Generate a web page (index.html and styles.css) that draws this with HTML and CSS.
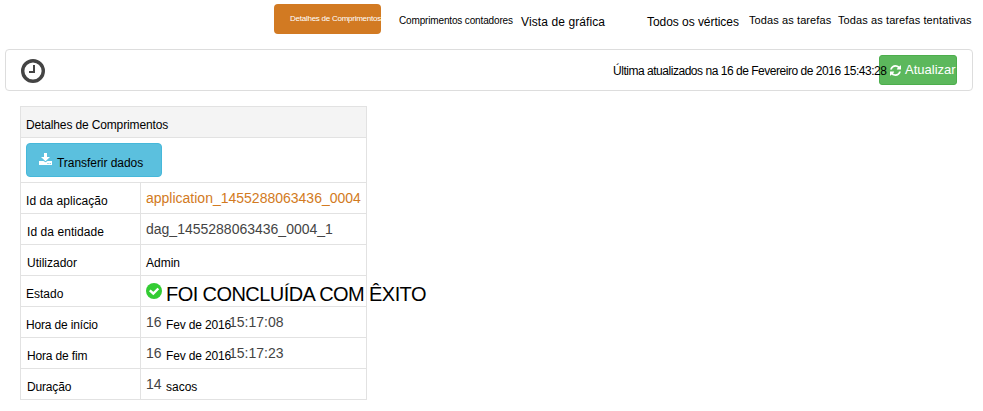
FILE: index.html
```html
<!DOCTYPE html>
<html lang="pt">
<head>
<meta charset="utf-8">
<title>Detalhes de Comprimentos</title>
<link rel="stylesheet" href="styles.css">
</head>
<body>
<nav class="tabs">
  <a class="tab tab-active"><span>Detalhes de Comprimentos</span></a>
  <a class="tab tab-counters"><span>Comprimentos contadores</span></a>
  <a class="tab tab-graph"><span>Vista de gráfica</span></a>
  <a class="tab tab-vertices"><span>Todos os vértices</span></a>
  <a class="tab tab-tasks"><span>Todas as tarefas</span></a>
  <a class="tab tab-attempts"><span>Todas as tarefas tentativas</span></a>
</nav>
<header class="status-bar">
  <svg class="clock" viewBox="0 0 24 24"><circle cx="12" cy="12" r="10.3" fill="none" stroke="#444" stroke-width="3.4"/><path d="M13 6v7H8" fill="none" stroke="#444" stroke-width="2"/></svg>
  <span class="updated">Última atualizados na 16 de Fevereiro de 2016 15:43:28</span>
  <button class="refresh"><svg class="refresh-icon" viewBox="0 0 1536 1536"><path fill="#fff" d="M1511 928q0 5-1 7-64 268-268 434.500T764 1536q-146 0-282.500-55T238 1324l-129 129q-19 19-45 19t-45-19-19-45V960q0-26 19-45t45-19h448q26 0 45 19t19 45-19 45l-137 137q71 66 161 102t187 36q134 0 250-65t186-179q11-17 53-117 8-23 30-23h192q13 0 22.500 9.500t9.500 22.500zm25-800v448q0 26-19 45t-45 19h-448q-26 0-45-19t-19-45 19-45l138-138Q969 256 768 256q-134 0-250 65T332 500q-11 17-53 117-8 23-30 23H50q-13 0-22.500-9.500T18 608v-7q65-268 270-434.500T768 0q146 0 284 55.500T1297 212l130-129q19-19 45-19t45 19 19 45z"/></svg><span>Atualizar</span></button>
</header>
<main class="details">
  <div class="title"><span>Detalhes de Comprimentos</span></div>
  <div class="actions">
    <button class="download"><svg class="download-icon" viewBox="0 0 13 12"><path fill="#fff" d="M5 0h3v4h3L6.500 8.200 2 4h3zM0 8h4.500l2 1.200 2-1.200H13v4H0z"/><path fill="#5bc0de" d="M8.500 10h1v1h-1zM10.700 10h1v1h-1z"/></svg><span>Transferir dados</span></button>
  </div>
  <div class="row"><div class="label"><span class="wide">Id da aplicação</span></div><div class="value"><a class="data link">application_1455288063436_0004</a></div></div>
  <div class="row"><div class="label in"><span class="wide">Id da entidade</span></div><div class="value"><span class="data">dag_1455288063436_0004_1</span></div></div>
  <div class="row"><div class="label in"><span>Utilizador</span></div><div class="value"><span class="text">Admin</span></div></div>
  <div class="row"><div class="label"><span>Estado</span></div><div class="value"><svg class="check" viewBox="0 0 16 16"><circle cx="8" cy="8" r="8" fill="#3c3"/><path d="M3.800 7.300l3.500 3.200 5-5" fill="none" stroke="#fff" stroke-width="2.400"/></svg><span class="state">FOI CONCLUÍDA COM ÊXITO</span></div></div>
  <div class="row"><div class="label"><span class="tight">Hora de início</span></div><div class="value"><span class="data num">16</span><span class="text date">Fev de 2016</span><span class="data">15:17:08</span></div></div>
  <div class="row"><div class="label in"><span class="tight">Hora de fim</span></div><div class="value"><span class="data num">16</span><span class="text date">Fev de 2016</span><span class="data">15:17:23</span></div></div>
  <div class="row"><div class="label in"><span class="tight">Duração</span></div><div class="value"><span class="data num">14</span><span class="text">sacos</span></div></div>
</main>
</body>
</html>
```
FILE: styles.css
```css
* { box-sizing: border-box; }
body {
  margin: 0;
  width: 983px;
  height: 411px;
  overflow: hidden;
  background: #fff;
  color: #000;
  font: 12px/16px "Liberation Sans", Arial, sans-serif;
  white-space: nowrap;
}
button { font: inherit; white-space: nowrap; }

.tabs { display: flex; height: 49px; padding: 4px 0 0 274px; }
.tab { flex: none; }
.tab-active {
  width: 107px;
  height: 30px;
  padding: 7px 0 0 16px;
  border-radius: 4px;
  background: #d27a22;
  color: #fff;
  font-size: 8px;
  letter-spacing: -0.25px;
  overflow: hidden;
}
.tab-counters { width: 122px; margin-left: 18px; padding-top: 9px; font-size: 10px; letter-spacing: -0.15px; }
.tab-graph { width: 126px; padding-top: 10px; letter-spacing: 0.1px; }
.tab-vertices { width: 102px; padding-top: 10px; letter-spacing: -0.05px; }
.tab-tasks { width: 89px; padding-top: 8px; font-size: 11px; letter-spacing: 0.1px; }
.tab-attempts { padding-top: 8px; font-size: 11px; letter-spacing: 0.1px; }

.status-bar {
  display: flex;
  width: 968px;
  height: 42px;
  margin-left: 5px;
  padding: 5px 15px 0;
  border: 1px solid #ddd;
  border-radius: 4px;
}
.clock { flex: none; width: 24px; height: 24px; margin: 4px 0 0; }
.updated {
  flex: none;
  width: 266px;
  margin: 8px 0 0 568px;
  position: relative;
  z-index: 1;
  font-size: 12px;
  letter-spacing: -0.47px;
}
.refresh {
  display: flex;
  flex: none;
  width: 78px;
  height: 30px;
  padding: 6px 0 0 10px;
  border: 1px solid #4cae4c;
  border-radius: 3px;
  background: #5cb85c;
  color: #fff;
  font-size: 13px;
}
.refresh-icon { flex: none; width: 11px; height: 11px; margin: 3px 4px 0 0; }

.details { width: 347px; margin: 15px 0 0 20px; border: 1px solid #e2e2e2; border-bottom: 0; }
.title { height: 31px; padding: 10px 5px 0; border-bottom: 1px solid #e2e2e2; background: #f4f4f4; letter-spacing: -0.14px; }
.actions { height: 45px; padding: 5px; border-bottom: 1px solid #e2e2e2; }
.download {
  display: flex;
  width: 136px;
  height: 34px;
  padding: 9px 0 0 12px;
  border: 1px solid #46b8da;
  border-radius: 4px;
  background: #5bc0de;
  color: #000;
  letter-spacing: -0.05px;
}
.download span { margin-top: 2px; }
.download-icon { flex: none; width: 13px; height: 12px; margin-right: 5px; }
.row { display: flex; height: 31px; border-bottom: 1px solid #e2e2e2; }
.label { flex: none; width: 120px; padding: 10px 0 0 5px; border-right: 1px solid #e2e2e2; }
.label.in { padding-left: 6px; }
.wide { letter-spacing: 0.07px; }
.tight { letter-spacing: -0.16px; }
.value { display: flex; padding-left: 5px; }
.data { padding-top: 7px; color: #444; font-size: 14px; }
.link { color: #d27a22; }
.num { width: 20px; }
.text { padding-top: 10px; }
.date { width: 63px; letter-spacing: -0.15px; }
.check { flex: none; width: 16px; height: 16px; margin: 7px 4px 0 0; }
.state { padding-top: 7px; font-size: 20px; line-height: 22px; letter-spacing: -0.57px; }
```
